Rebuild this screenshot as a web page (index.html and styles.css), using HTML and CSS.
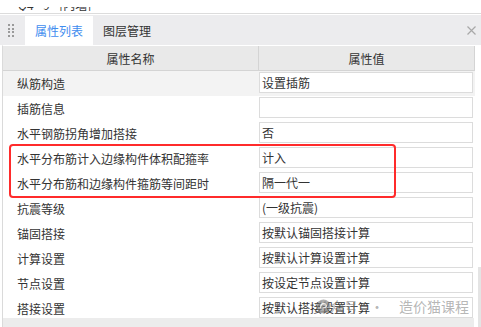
FILE: index.html
```html
<!DOCTYPE html>
<html lang="zh-CN">
<head>
  <meta charset="UTF-8" />
  <title>属性列表</title>
  <link rel="stylesheet" href="styles.css">
</head>
<body>
  <div class="page">
    <div class="doc-title">
      <div class="doc-clip"><span>Q4 - 9 - [内墙]</span></div>
    </div>

    <div class="tabbar">
      <div class="grip">
        <i></i><i></i><i></i><i></i><i></i><i></i><i></i><i></i>
      </div>
      <div class="tab active">属性列表</div>
      <div class="tab">图层管理</div>
      <svg class="close" width="9" height="9" viewBox="0 0 9 9">
        <path d="M0.5 0.5 L8.5 8.5 M8.5 0.5 L0.5 8.5" stroke="#a8a8a8" stroke-width="1.2" fill="none"/>
      </svg>
    </div>

    <div class="grid">
      <div class="head">
        <div class="hcell">属性名称</div>
        <div class="hcell">属性值</div>
      </div>
      <div class="rows">
        <div class="row hover"><div class="name">纵筋构造</div><div class="val"><span class="box">设置插筋</span></div></div>
        <div class="row"><div class="name">插筋信息</div><div class="val"><span class="box"></span></div></div>
        <div class="row"><div class="name">水平钢筋拐角增加搭接</div><div class="val"><span class="box">否</span></div></div>
        <div class="row"><div class="name">水平分布筋计入边缘构件体积配箍率</div><div class="val"><span class="box">计入</span></div></div>
        <div class="row"><div class="name">水平分布筋和边缘构件箍筋等间距时</div><div class="val"><span class="box">隔一代一</span></div></div>
        <div class="row"><div class="name">抗震等级</div><div class="val"><span class="box">(一级抗震)</span></div></div>
        <div class="row"><div class="name">锚固搭接</div><div class="val"><span class="box">按默认锚固搭接计算</span></div></div>
        <div class="row"><div class="name">计算设置</div><div class="val"><span class="box">按默认计算设置计算</span></div></div>
        <div class="row"><div class="name">节点设置</div><div class="val"><span class="box">按设定节点设置计算</span></div></div>
        <div class="row"><div class="name">搭接设置</div><div class="val"><span class="box">按默认搭接设置计算</span></div></div>
      </div>
      <div class="foot"></div>
    </div>

    <div class="mark"></div>
    <div class="thumb"></div>

    <div class="watermark">
      <svg class="wm-logo" width="15" height="15" viewBox="0 0 15 15">
        <circle cx="7.5" cy="7.5" r="7" fill="rgba(110,110,110,0.55)"/>
        <path d="M4.5 9.5 C4.5 6 6 4.5 8 4.5 C10 4.5 10.8 6 10.3 7.4 C9.8 8.8 8.3 9 7.6 8.2" stroke="rgba(255,255,255,0.8)" stroke-width="1.3" fill="none"/>
      </svg>
      <span class="wm-text">公众号</span>
      <span class="wm-dot">·</span>
      <span class="wm-text">造价猫课程</span>
    </div>
  </div>
</body>
</html>
```

FILE: styles.css
```css
body {
  margin: 0;
  background: #fff;
  font-family: "Noto Sans CJK SC", "Microsoft YaHei", sans-serif;
  font-size: 12px;
  color: #333;
}
.page {
  position: relative;
  width: 481px;
  height: 327px;
  overflow: hidden;
}
.doc-title {
  height: 13px;
  border-bottom: 1px solid #dcdcdc;
  padding-left: 18px;
  display: flow-root;
}
.doc-clip {
  display: flow-root;
  margin-top: 7px;
  height: 4px;
  overflow: hidden;
}
.doc-clip span {
  display: block;
  line-height: 12px;
  margin-top: -8px;
  color: #333;
}
.tabbar {
  margin-top: 1px;
  height: 30px;
  background: #ececee;
  display: flex;
  align-items: stretch;
}
.grip {
  width: 6px;
  margin: 9px 11px 0 8px;
  display: grid;
  grid-template-columns: 2px 2px;
  grid-auto-rows: 2px;
  column-gap: 2px;
  row-gap: 1.5px;
}
.grip i {
  background: #9a9a9a;
}
.tab {
  display: flex;
  align-items: center;
  padding: 0 10px;
  margin-top: 1px;
}
.tab.active {
  background: #fff;
  color: #3f8def;
}
.close {
  margin: 11px 5px 0 auto;
}
.grid {
  margin-left: 2px;
  width: 472px;
  border-left: 1px solid #dadada;
  border-top: 1px solid #fff;
}
.head {
  display: grid;
  grid-template-columns: 255px 216px;
  height: 24px;
  background: #e9e9e9;
  border-bottom: 1px solid #d4d4d4;
  border-right: 1px solid #d4d4d4;
}
.hcell {
  display: flex;
  align-items: center;
  justify-content: center;
}
.hcell + .hcell {
  border-left: 1px solid #d4d4d4;
}
.row {
  display: grid;
  grid-template-columns: 255px 216px;
  height: 25px;
}
.row:last-child {
  height: 22px;
}
.row.hover {
  background: #f3f3f3;
}
.name {
  padding-left: 14px;
  line-height: 25px;
}
.val {
  padding: 1px 0 0 1px;
}
.box {
  display: block;
  box-sizing: border-box;
  width: 214px;
  height: 21px;
  line-height: 19px;
  padding-left: 2px;
  background: #fff;
  border: 1px solid #dcdcdc;
}
.foot {
  height: 12px;
  width: 471px;
  background: #ececec;
}
.mark {
  position: absolute;
  left: 9px;
  top: 144px;
  width: 383px;
  height: 50px;
  border: 2px solid #ff2b2b;
  border-radius: 4px;
}
.thumb {
  position: absolute;
  left: 478px;
  top: 267px;
  width: 3px;
  height: 60px;
  background: #e4e4e4;
}
.watermark {
  position: absolute;
  left: 313px;
  top: 297px;
  display: flex;
  align-items: center;
  color: rgba(120, 120, 120, 0.55);
  font-size: 14px;
  line-height: 18px;
}
.wm-logo {
  margin-left: 3px;
  margin-right: -15px;
}
.wm-dot {
  margin: 0 15px 0 12px;
}
```
